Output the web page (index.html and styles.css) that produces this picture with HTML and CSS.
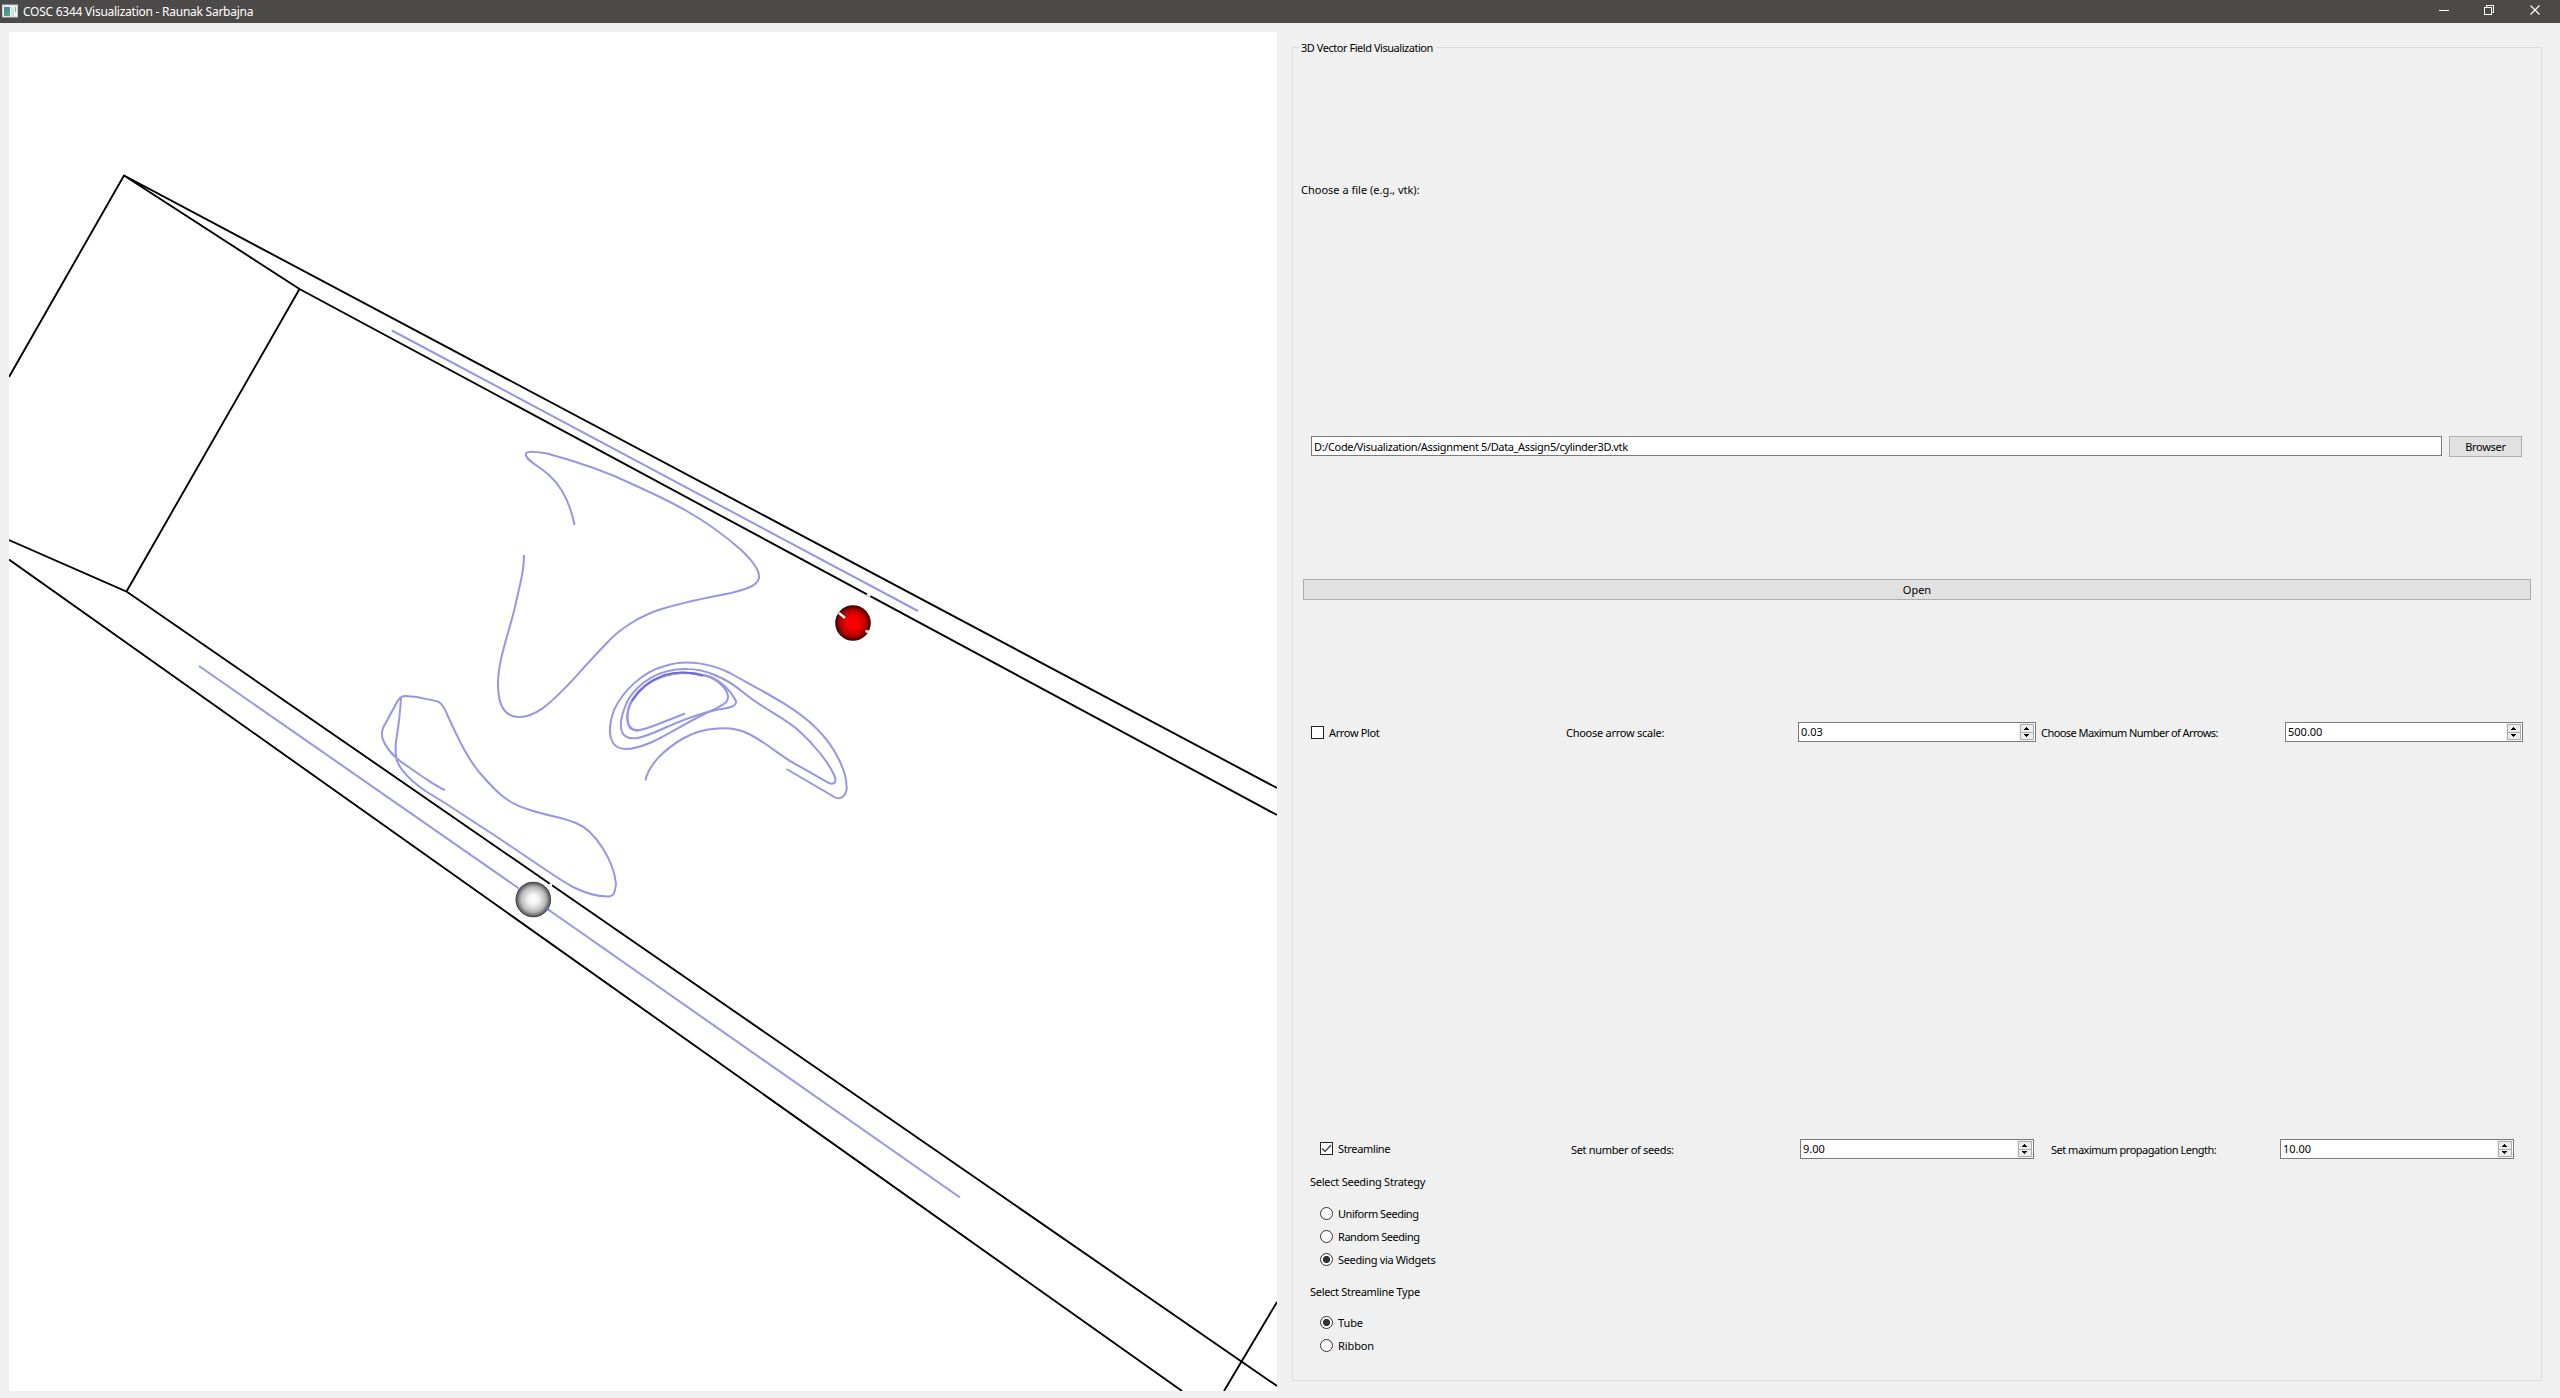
FILE: index.html
```html
<!DOCTYPE html>
<html lang="en">
<head>
<meta charset="utf-8">
<title>COSC 6344 Visualization - Raunak Sarbajna</title>
<link rel="stylesheet" href="styles.css">
</head>
<body>
<header class="titlebar">
  <svg class="app-icon" width="16" height="14" viewBox="0 0 16 14">
    <defs><linearGradient id="app" x1="0" y1="0" x2="0.6" y2="1"><stop offset="0" stop-color="#4a7fae"/><stop offset="1" stop-color="#4fa67c"/></linearGradient></defs>
    <rect x="0.5" y="1" width="15" height="12" fill="#f2f4f4" stroke="#c9cdd0"/>
    <rect x="2" y="3" width="6" height="9" fill="url(#app)"/>
    <rect x="9" y="3" width="3" height="9" fill="#dcdfe0"/>
    <rect x="13" y="3" width="1" height="5" fill="#7fb6a2"/>
  </svg>
  <span class="title">COSC 6344 Visualization - Raunak Sarbajna</span>
  <svg class="window-controls" width="104" height="12" viewBox="0 0 104 12" fill="none" stroke="#fff" shape-rendering="crispEdges">
    <path d="M0 6.500H10M45.500 3.500H52.500V10.500H45.500ZM47.500 3V1.500H54.500V8.500H53"/>
    <path d="M91.500 1.500L100.500 10.500M100.500 1.500L91.500 10.500" stroke-width="1.200" shape-rendering="auto"/>
  </svg>
</header>
<main class="window">
  <svg class="viewport" viewBox="9 32 1268 1359">
    <defs>
      <radialGradient id="red"><stop offset="0" stop-color="#f00"/><stop offset=".35" stop-color="#f40000"/><stop offset=".7" stop-color="#bd0000"/><stop offset=".9" stop-color="#6a0000"/><stop offset="1" stop-color="#2c0000"/></radialGradient>
      <radialGradient id="grey"><stop offset="0" stop-color="#fff"/><stop offset=".3" stop-color="#f2f2f2"/><stop offset=".7" stop-color="#b8b8b8"/><stop offset=".9" stop-color="#6c6c6c"/><stop offset="1" stop-color="#333"/></radialGradient>
    </defs>
    <g class="outline">
      <path d="M9 377L124 175.500L1277 788M124 175.500L299.500 289L1277 815M299.500 289L126.500 591.500L9 540M126.500 591.500L1277 1386M9 559.500L1182 1391M1224 1391L1277 1302"/>
    </g>
    <g class="stream">
      <path d="M392 330.500L918 611"/>
      <path d="M199 666L519 888.500"/>
      <path d="M546 908L960 1197.500"/>
      <path d="M574.500 525C570 502 560 485 549 475C538 465 525 460 525.700 454C527 450 537 452 547 453.500C575 461 605 471 632 484C670 501 705 518 740 549C752 560 760 570 759 578C757 586 747 589 731 593C705 598 685 602 665 608C640 615 618 630 605 645C590 660 577 676 566 687C552 701 537 717 519 717C505 717 498 705 498 684C498 660 508 636 515 607C521 580 524 570 524 555"/>
      <path d="M645.500 780.500C648 766 664 749 684 738C703 727 732 725 749 734C767 743 780 756 797 765L829 783C834 785 837 782 834.500 776C829 763 814 744 797 729C780 715 762 708 744 693C725 677 704 669 688 669C660 668 639 682 628 700C621 715 618 728 624 735C631 742 644 737 660 730C680 721 697 714 716 710C728 708 737 707 736 701C731 691 718 677 704 675C680 669 655 676 640 690C628 703 624 718 630 728C636 733 648 728 661 723L685 713.500"/>
      <path d="M786.500 769L831 795C837 800 844 800 846.500 790C848 774 836 747 815 727C795 707 760 690 730 673C710 663 685 659 665 666C642 672 623 691 614 710C609 724 609 736 613 743C619 752 634 750 652 742C673 732 690 720 715 709C724 704 728 703 728 697C728 690 718 679 706 676C684 670 661 674 648 683C635 693 627 705 627.500 717C627 725 631 730 638 731"/>
      <path d="M445 790C437 787 428 780 420 775L400 761C391 754 386 747 383 740C381 735 382 731 383 728L396 704C399 697 402 696 405 696L417 697C425 699 433 700 439 702C445 706 446 713 452 725C460 742 467 757 479 772C497 793 507 803 530 810C548 816 562 817 576 823C596 831 614 862 616 884C615 892 614 896 609 896.500C593 897 579 890 573 887C562 881 552 874 543 868L497 837L445 803L427 792C415 784 402 773 397 761C394 750 396 741 397 735C399 723 400 715 401 697"/>
    </g>
    <path class="core" d="M632 701C640 689 651 680 664 675C677 671 692 672 703 676"/>
    <circle cx="853" cy="623" r="17.800" fill="url(#red)"/>
    <circle cx="533.300" cy="899.500" r="17.800" fill="url(#grey)"/>
    <path class="notch" d="M839 613L845 618M865.500 631L869.500 632M867 594L870.500 596M549.500 884L552 885.500"/>
    <path class="core" d="M545 907.500L549 910"/>
  </svg>
  <section class="panel">
    <h1 class="legend t">3D Vector Field Visualization</h1>
    <label class="choose t">Choose a file (e.g., vtk):</label>
    <div class="file-row">
      <div class="field path"><span class="t">D:/Code/Visualization/Assignment 5/Data_Assign5/cylinder3D.vtk</span></div>
      <button class="btn browse"><span class="t">Browser</span></button>
    </div>
    <button class="btn open"><span class="t">Open</span></button>
    <div class="arrow-row">
      <label class="check"><i class="box"></i><span class="t">Arrow Plot</span></label>
      <span class="t arrow-scale">Choose arrow scale:</span>
      <div class="field spin"><span class="t">0.03</span><svg class="arrows" width="15" height="18" viewBox="0 0 15 18"><use href="#spin"/></svg></div>
      <span class="t lab">Choose Maximum Number of Arrows:</span>
      <div class="field spin"><span class="t">500.00</span><svg class="arrows" width="15" height="18" viewBox="0 0 15 18"><use href="#spin"/></svg></div>
    </div>
    <div class="stream-row">
      <label class="check"><i class="box"><svg width="11" height="11" viewBox="0 0 11 11"><path d="M1 5.500L4 8.500L10 2" fill="none" stroke="#333" stroke-width="1.200"/></svg></i><span class="t">Streamline</span></label>
      <span class="t seeds">Set number of seeds:</span>
      <div class="field spin"><span class="t">9.00</span><svg class="arrows" width="15" height="18" viewBox="0 0 15 18"><use href="#spin"/></svg></div>
      <span class="t lab">Set maximum propagation Length:</span>
      <div class="field spin"><span class="t">10.00</span><svg class="arrows" width="15" height="18" viewBox="0 0 15 18"><use href="#spin"/></svg></div>
    </div>
    <div class="group-title seeding t">Select Seeding Strategy</div>
    <div class="radios">
      <label class="radio tight"><i class="dot"></i><span class="t">Uniform Seeding</span></label>
      <label class="radio tight"><i class="dot"></i><span class="t">Random Seeding</span></label>
      <label class="radio"><i class="dot on"></i><span class="t">Seeding via Widgets</span></label>
    </div>
    <div class="group-title type t">Select Streamline Type</div>
    <div class="radios lower">
      <label class="radio loose"><i class="dot on"></i><span class="t">Tube</span></label>
      <label class="radio loose"><i class="dot"></i><span class="t">Ribbon</span></label>
    </div>
  </section>
</main>
<svg class="defs" width="0" height="0">
  <symbol id="spin" viewBox="0 0 15 18">
    <rect width="15" height="18" fill="#f0f0f0"/>
    <path d="M1.500 1.500H14.500V16.500H1.500ZM1.500 9.500H14.500" fill="#ececec" stroke="#acacac"/>
    <path d="M5 7H10V6H9V5H8V4H7V5H6V6H5ZM5 11H10V12H9V13H8V14H7V13H6V12H5Z" fill="#000" shape-rendering="crispEdges"/>
  </symbol>
</svg>
</body>
</html>
```

FILE: styles.css
```css
* { box-sizing: border-box; }
body {
  margin: 0;
  width: 2560px;
  height: 1398px;
  overflow: hidden;
  display: flex;
  flex-direction: column;
  background: #f0f0f0;
  color: #000;
  font: 11px/14px "Noto Sans", sans-serif;
}
.titlebar {
  height: 23px;
  flex: none;
  display: flex;
  align-items: center;
  background: #4c4a48;
  color: #fff;
  font-size: 12px;
  padding: 0 17px 0 2px;
}
.app-icon { margin: 0 5px 1px 0; }
.title { white-space: nowrap; letter-spacing: -0.25px; }
.window-controls { margin: 0 0 3px auto; }
.window { flex: 1; display: flex; padding: 9px 18px 7px 9px; }
.viewport { width: 1268px; height: 1359px; background: #fff; flex: none; }
.outline { fill: none; stroke: #000; stroke-width: 1.9; }
.stream { fill: none; stroke: #9696e4; stroke-width: 2; }
.core { fill: none; stroke: #6a6ad2; stroke-width: 1.8; }
.notch { fill: none; stroke: #fff; stroke-width: 2.4; }
.panel {
  width: 1250px;
  height: 1334px;
  margin: 15px 0 0 15px;
  border: 1px solid #dcdcdc;
  display: flex;
  flex-direction: column;
  align-items: flex-start;
}
.t { white-space: nowrap; }
.legend {
  margin: -7px 0 0 6px;
  padding: 0 3px 0 2px;
  background: #f0f0f0;
  font: inherit;
  letter-spacing: -0.46px;
}
.choose { margin: 128px 0 0 8px; }
.file-row { display: flex; gap: 7px; margin: 239px 0 0 18px; }
.field {
  height: 20px;
  background: #fff;
  border: 1px solid #7a7a7a;
  display: flex;
  align-items: center;
  padding-left: 2px;
}
.path { width: 1131px; padding-top: 1px; letter-spacing: -0.36px; }
.btn {
  height: 21px;
  padding: 0;
  background: #e1e1e1;
  border: 1px solid #adadad;
  color: #000;
  font: inherit;
  line-height: 14px;
}
.browse { width: 73px; letter-spacing: -0.3px; }
.open { width: 1228px; margin: 122px 0 0 10px; }
.arrow-row, .stream-row { display: grid; align-items: center; height: 21px; }
.arrow-row {
  grid-template-columns: 255px 232px 238px 249px 238px;
  margin: 122px 0 0 18px;
}
.stream-row {
  grid-template-columns: 251px 229px 234px 246px 234px;
  margin: 396px 0 0 27px;
}
.check, .radio { display: flex; align-items: center; gap: 5px; letter-spacing: -0.35px; }
.tight { letter-spacing: -0.46px; }
.loose { letter-spacing: -0.1px; }
.stream-row .check { margin-bottom: 2px; }
.box {
  width: 13px;
  height: 13px;
  border: 1px solid #222;
  background: #fff;
  display: block;
  flex: none;
}
.box svg { display: block; }
.spin { justify-content: space-between; align-self: start; padding-left: 2px; }
.arrows { flex: none; margin-right: 1px; }
.arrow-scale { letter-spacing: -0.26px; }
.seeds { letter-spacing: -0.33px; }
.lab { padding-left: 5px; letter-spacing: -0.56px; }
.stream-row .lab { padding-left: 17px; letter-spacing: -0.49px; }
.group-title { margin-left: 17px; }
.seeding { margin-top: 15px; letter-spacing: -0.25px; }
.type { margin-top: 17px; letter-spacing: -0.3px; }
.radios { margin: 16px 0 0 27px; display: flex; flex-direction: column; gap: 6px; }
.lower { margin-top: 15px; }
.radio { height: 17px; }
.dot {
  width: 13px;
  height: 13px;
  border: 1px solid #333;
  border-radius: 50%;
  background: #fff;
  flex: none;
}
.dot.on { background: radial-gradient(circle, #333 3.2px, #fff 4px); }
.defs { position: absolute; }
```
